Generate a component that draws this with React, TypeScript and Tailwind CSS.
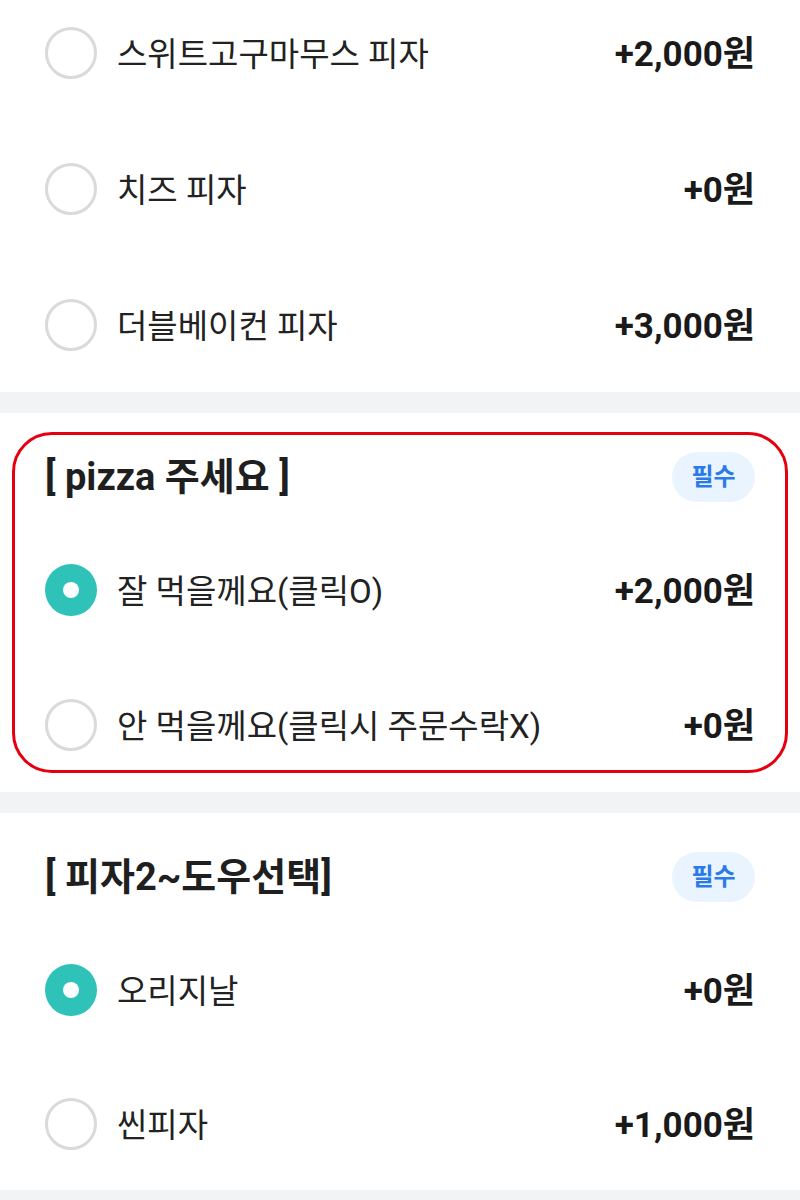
import React from 'react';

type Option = { label: string; price: string; checked?: boolean };

const font = { fontFamily: "Roboto, 'Noto Sans CJK KR', sans-serif" };

const Radio = ({ checked }: { checked?: boolean }) =>
  checked ? (
    <span className="flex h-[52px] w-[52px] shrink-0 items-center justify-center rounded-full bg-[#2ec2b8]">
      <span className="h-[16px] w-[16px] rounded-full bg-white" />
    </span>
  ) : (
    <span className="h-[52px] w-[52px] shrink-0 rounded-full border-[3px] border-[#dadada] bg-white" />
  );

const Row = ({ label, price, checked }: Option) => (
  <div className="flex h-[52px] items-center">
    <Radio checked={checked} />
    <span className="ml-[20px] flex-1 pt-[3px] text-[33px] leading-none text-[#222]">{label}</span>
    <span className="pt-[3px] text-[35px] font-bold leading-none text-[#1a1a1a]">{price}</span>
  </div>
);

const Header = ({ title }: { title: string }) => (
  <div className="flex h-[50px] items-center justify-between">
    <h3 className="text-[38px] font-bold leading-none text-[#1f1f1f]">{title}</h3>
    <span className="flex h-[50px] w-[83px] items-center justify-center rounded-full bg-[#e9f4ff] text-[24px] font-bold text-[#2a7ae8]">
      필수
    </span>
  </div>
);

const Band = () => <div className="h-[21px] bg-[#f2f3f5]" />;

export default function App() {
  const first: Option[] = [
    { label: '스위트고구마무스 피자', price: '+2,000원' },
    { label: '치즈 피자', price: '+0원' },
    { label: '더블베이컨 피자', price: '+3,000원' },
  ];

  return (
    <div className="w-[800px] h-[1200px] overflow-hidden bg-white" style={font}>
      <section className="flex flex-col gap-[84px] px-[45px] pt-[27px] pb-[41px]">
        {first.map((o) => (
          <Row key={o.label} {...o} />
        ))}
      </section>
      <Band />

      <section className="px-[12px] pt-[19px] pb-[19px]">
        <div className="rounded-[40px] border-[3px] border-[#e5000f] px-[30px] pt-[17px] pb-[19px]">
          <Header title="[ pizza 주세요 ]" />
          <div className="mt-[62px] flex flex-col gap-[83px]">
            <Row label="잘 먹을께요(클릭O)" price="+2,000원" checked />
            <Row label="안 먹을께요(클릭시 주문수락X)" price="+0원" />
          </div>
        </div>
      </section>
      <Band />

      <section className="px-[45px] pt-[39px] pb-[40px]">
        <Header title="[ 피자2~도우선택]" />
        <div className="mt-[62px] flex flex-col gap-[82px]">
          <Row label="오리지날" price="+0원" checked />
          <Row label="씬피자" price="+1,000원" />
        </div>
      </section>
      <Band />
    </div>
  );
}
